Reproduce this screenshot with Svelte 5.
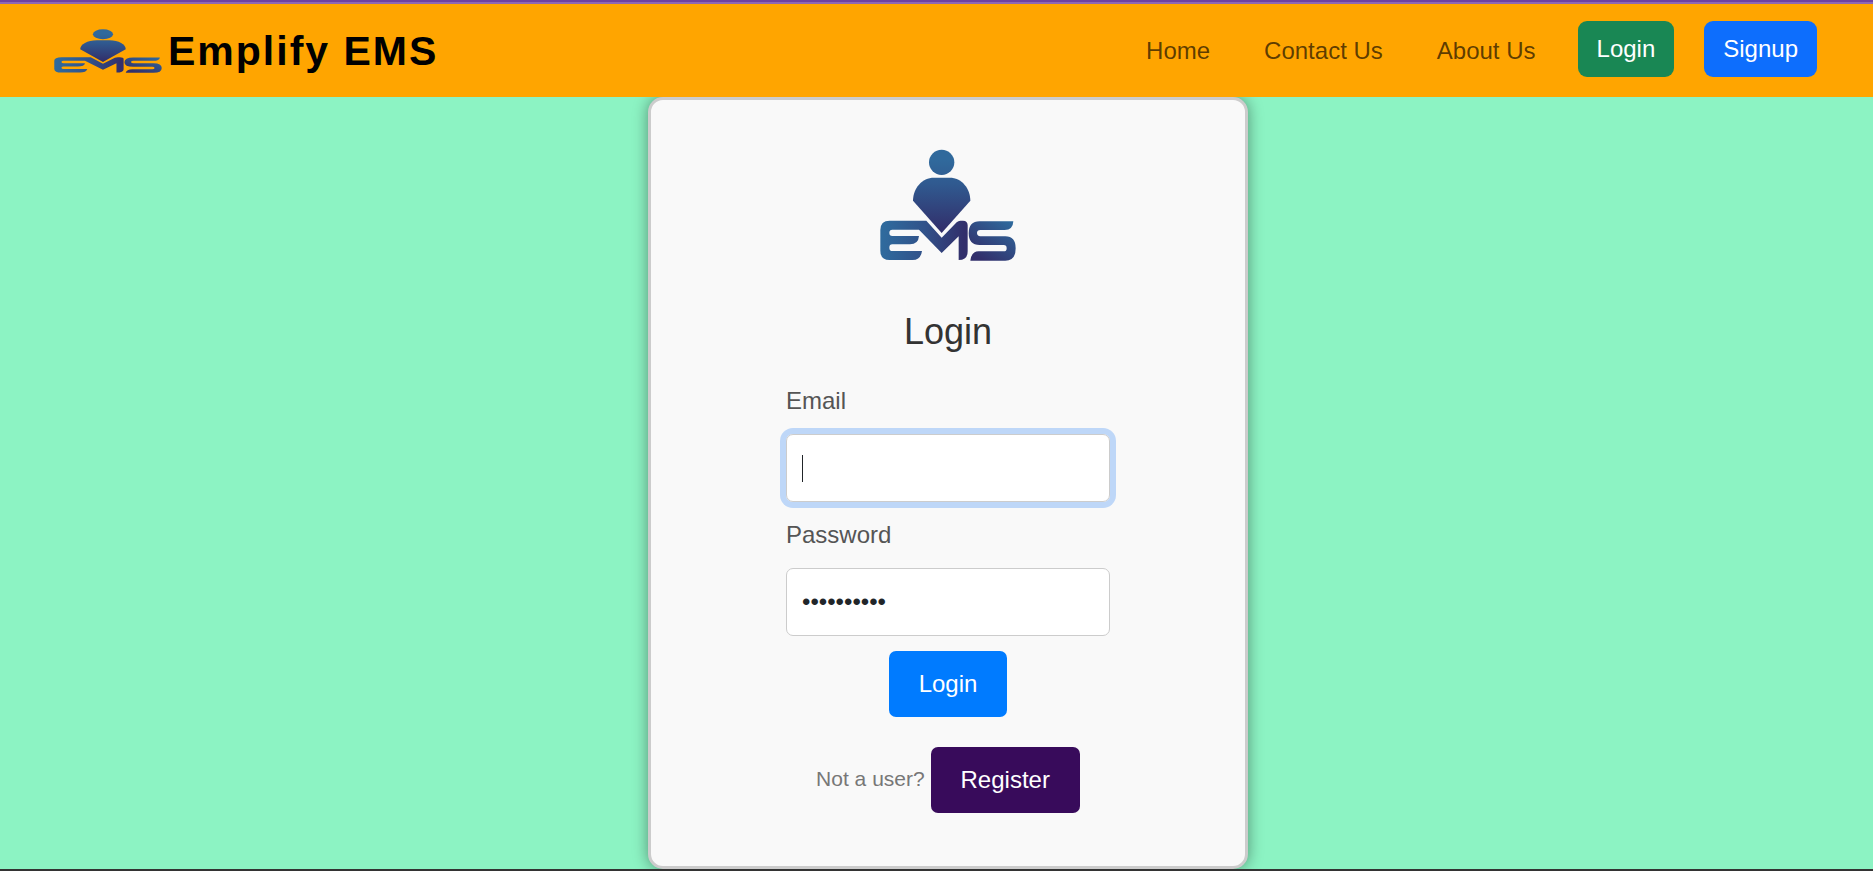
<script>
  let email = $state('');
  let password = $state('employee12');
  const links = ['Home', 'Contact Us', 'About Us'];
</script>

{#snippet logo(id, cls)}
  <svg class={cls} viewBox="60 56 408 336" preserveAspectRatio="none" role="img" aria-label="EMS">
    <defs>
      <linearGradient id="{id}-body" gradientUnits="userSpaceOnUse" x1="245" y1="90" x2="245" y2="300">
        <stop offset="0" stop-color="#30699c" />
        <stop offset="0.35" stop-color="#30598f" />
        <stop offset="1" stop-color="#322f6b" />
      </linearGradient>
      <linearGradient id="{id}-em" gradientUnits="userSpaceOnUse" x1="70" y1="320" x2="310" y2="340">
        <stop offset="0" stop-color="#2f6a9d" />
        <stop offset="0.5" stop-color="#31528a" />
        <stop offset="1" stop-color="#322f6b" />
      </linearGradient>
      <linearGradient id="{id}-s" gradientUnits="userSpaceOnUse" x1="450" y1="270" x2="370" y2="390">
        <stop offset="0" stop-color="#2f6a9d" />
        <stop offset="1" stop-color="#322f6b" />
      </linearGradient>
    </defs>
    <circle cx="245" cy="96" r="38" fill="url(#{id}-body)" />
    <path fill="url(#{id}-body)" d="M159 211C159 174 186 142 222 142H269C305 142 331 174 331 211L245 308Z" />
    <path
      fill="url(#{id}-em)"
      d="M89 271H199L245 322L290 276Q295 271 301 271H309Q323 271 323 285V363Q323 389 296 389V318L245 368L177 298H97Q88 298 88 307.500T97 317H177Q175 342 150 342H97Q88 342 88 352T97 362H186Q182 389 158 389H89Q61 389 61 361V299Q61 271 89 271Z"
    />
    <path
      fill="url(#{id}-s)"
      d="M460 273Q459 299 434 299H361Q351 299 351 308T361 318H436Q467 318 467 354Q467 391 436 391H331Q334 363 356 363H431Q440 363 440 353.500T431 344H359Q326 344 326 309Q326 273 359 273Z"
    />
  </svg>
{/snippet}

<div class="page">
  <header>
    <a class="brand" href="#home">
      {@render logo('nav', 'nav-logo')}
      <span>Emplify EMS</span>
    </a>
    <nav>
      {#each links as link}
        <a class="link" href="#{link}">{link}</a>
      {/each}
      <div class="actions">
        <button class="btn green" type="button">Login</button>
        <button class="btn blue" type="button">Signup</button>
      </div>
    </nav>
  </header>

  <main>
    <section class="card">
      {@render logo('card', 'card-logo')}
      <h1>Login</h1>
      <form onsubmit={(e) => e.preventDefault()}>
        <label for="email">Email</label>
        <div class="field active">
          <input id="email" type="email" bind:value={email} />
          <span class="caret"></span>
        </div>
        <label for="password">Password</label>
        <div class="field">
          <input id="password" type="password" bind:value={password} />
        </div>
        <button class="big submit" type="submit">Login</button>
      </form>
      <p>Not a user? <button class="big register" type="button">Register</button></p>
    </section>
  </main>
  <footer></footer>
</div>

<style>
  :global(body) {
    margin: 0;
  }
  .page {
    display: flex;
    flex-direction: column;
    min-height: 100vh;
    background: #8cf3c3;
    font-family: 'Liberation Sans', Arial, sans-serif;
    font-size: 24px;
    line-height: 36px;
  }
  *,
  *::before {
    box-sizing: border-box;
  }
  header {
    position: relative;
    z-index: 1;
    display: flex;
    align-items: center;
    justify-content: space-between;
    min-height: 97px;
    padding: 2px 56px 0 54px;
    background: orange;
    border-top: 2px solid #6f42a1;
    box-shadow: inset 0 2px #8f67b5;
  }
  .brand {
    display: flex;
    align-items: center;
    gap: 6px;
    color: #000;
    font-size: 41px;
    font-weight: 700;
    letter-spacing: 2px;
    line-height: 60px;
    text-decoration: none;
  }
  .nav-logo {
    width: 108px;
    height: 44px;
  }
  nav {
    display: flex;
    align-items: center;
    gap: 54px;
  }
  .link {
    color: rgba(0, 0, 0, 0.65);
    text-decoration: none;
  }
  .actions {
    display: flex;
    gap: 30px;
    margin-left: -12px;
    padding-bottom: 4px;
  }
  button {
    border: 0;
    color: #fff;
    font: inherit;
    cursor: pointer;
  }
  .btn {
    padding: 10px 19px;
    border-radius: 9px;
  }
  .green {
    background: #198754;
  }
  .blue {
    background: #0d6efd;
  }
  main {
    display: flex;
    flex: 1;
    justify-content: center;
    padding-left: 23px;
  }
  .card {
    display: flex;
    flex-direction: column;
    align-items: center;
    width: 100%;
    max-width: 600px;
    padding: 49px 40px 50px;
    background: #f9f9f9;
    border: 3px solid #ccc;
    border-radius: 15px;
    box-shadow: 0 0 15px rgba(0, 0, 0, 0.4);
  }
  .card-logo {
    width: 136px;
    height: 112px;
  }
  h1 {
    margin: 49px 0 30px;
    color: #333;
    font-size: 36px;
    font-weight: 400;
    line-height: 43px;
  }
  form {
    display: flex;
    flex-direction: column;
    gap: 15px;
    width: 100%;
    max-width: 324px;
  }
  label {
    color: #555;
  }
  .field {
    position: relative;
    display: flex;
    border-radius: 7px;
  }
  .active {
    box-shadow: 0 0 0 6px #bed7f8;
  }
  input {
    width: 100%;
    padding: 15px;
    border: 1px solid #ccc;
    border-radius: 7px;
    background: #fff;
    color: #212529;
    font: inherit;
    line-height: 36px;
    outline: 0;
  }
  .caret {
    position: absolute;
    top: 21px;
    left: 16px;
    width: 1px;
    height: 27px;
    background: #212529;
  }
  .big {
    padding: 15px 30px;
    border-radius: 7px;
  }
  .submit {
    align-self: center;
    background: #007bff;
  }
  p {
    margin: 30px 0 0;
    color: #777;
    font-size: 21px;
  }
  .register {
    background: #380b5b;
    font-size: 24px;
    vertical-align: middle;
  }
  footer {
    position: relative;
    height: 2px;
    background: #333;
  }
</style>
